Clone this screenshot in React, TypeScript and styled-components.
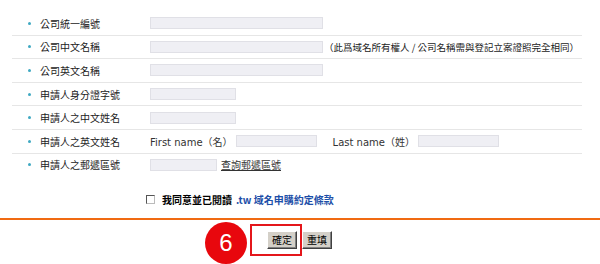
import React from "react";
import styled, { createGlobalStyle } from "styled-components";

const Global = createGlobalStyle`
  html, body { margin: 0; padding: 0; background: #fff; }
  body { width: 600px; height: 264px; overflow: hidden; font-family: "DejaVu Sans", "Noto Sans CJK TC", sans-serif; }
`;

const Page = styled.div`
  width: 600px;
  padding-top: 12px;
`;

const Form = styled.div`
  margin-left: 12px;
  width: 570px;
  display: flex;
  flex-direction: column;
`;

const Row = styled.div<{ $last?: boolean }>`
  display: flex;
  align-items: center;
  height: 22.6px;
  padding-left: 16px;
  border-bottom: ${(p) => (p.$last ? "none" : "1px solid #e6e6e6")};
`;

const Bullet = styled.span`
  width: 3px;
  height: 3px;
  border-radius: 50%;
  background: #3fa9c2;
  margin-right: 9px;
  flex: none;
`;

const Label = styled.span`
  width: 110px;
  flex: none;
  font-family: "Noto Sans CJK TC", sans-serif;
  font-size: 10px;
  color: #222;
`;

const Field = styled.div`
  display: flex;
  align-items: center;
`;

const Input = styled.div<{ $w: number }>`
  width: ${(p) => p.$w}px;
  height: 12px;
  background: #efeff4;
  border: 1px solid #e0e0e6;
  box-sizing: border-box;
  flex: none;
`;

const Note = styled.span`
  margin-left: 1px;
  font-family: "Noto Sans CJK TC", sans-serif;
  font-size: 9.5px;
  color: #222;
  white-space: nowrap;
`;

const Inline = styled.span<{ $ml?: number }>`
  margin-left: ${(p) => p.$ml ?? 0}px;
  margin-right: 3px;
  font-family: "DejaVu Sans", "Noto Sans CJK TC", sans-serif;
  font-size: 10px;
  color: #333;
  white-space: nowrap;
`;

const Link = styled.a`
  margin-left: 4px;
  font-family: "Noto Sans CJK TC", sans-serif;
  font-size: 10px;
  color: #333;
  text-decoration: underline;
`;

const AgreeRow = styled.div`
  margin-top: 11px;
  height: 24px;
  display: flex;
  align-items: center;
  padding-left: 146px;
`;

const Check = styled.span`
  width: 9px;
  height: 9px;
  box-sizing: border-box;
  border: 1px solid #555;
  border-right-color: #bbb;
  border-bottom-color: #bbb;
  background: #fff;
  margin-right: 7px;
  flex: none;
`;

const AgreeText = styled.span`
  font-family: "Noto Sans CJK TC", sans-serif;
  font-weight: 700;
  font-size: 10px;
  color: #000;
  white-space: nowrap;
`;

const AgreeLink = styled.span`
  margin-left: 4px;
  font-family: "Noto Sans CJK TC", sans-serif;
  font-weight: 700;
  font-size: 10px;
  color: #1d4fa8;
  white-space: nowrap;
`;

const Divider = styled.div`
  margin-top: 7px;
  height: 2px;
  background: #f06a12;
`;

const ButtonRow = styled.div`
  position: relative;
  padding-top: 11px;
  padding-left: 267px;
  display: flex;
  gap: 5px;
`;

const Button = styled.button`
  width: 30px;
  height: 18px;
  padding: 0;
  background: #d4d0c8;
  border: 1px solid;
  border-color: #fff #404040 #404040 #fff;
  box-shadow: inset -1px -1px 0 #808080;
  font-family: "Noto Sans CJK TC", sans-serif;
  font-size: 10px;
  color: #000;
  line-height: 16px;
`;

const Highlight = styled.div`
  position: absolute;
  left: 250px;
  top: 4px;
  width: 52px;
  height: 32px;
  box-sizing: border-box;
  border: 2px solid #e4161b;
`;

const Step = styled.div`
  position: absolute;
  left: 205px;
  top: 2px;
  width: 42px;
  height: 42px;
  border-radius: 50%;
  background: #e8070d;
  color: #fff;
  display: flex;
  align-items: center;
  justify-content: center;
  font-family: "Liberation Sans", Arial, sans-serif;
  font-size: 24px;
`;

const rows: { label: string; content: React.ReactNode }[] = [
  { label: "公司統一編號", content: <Input $w={173} /> },
  {
    label: "公司中文名稱",
    content: (
      <>
        <Input $w={173} />
        <Note>（此爲域名所有權人 / 公司名稱需與登記立案證照完全相同）</Note>
      </>
    ),
  },
  { label: "公司英文名稱", content: <Input $w={173} /> },
  { label: "申請人身分證字號", content: <Input $w={86} /> },
  { label: "申請人之中文姓名", content: <Input $w={86} /> },
  {
    label: "申請人之英文姓名",
    content: (
      <>
        <Inline>First name（名）</Inline>
        <Input $w={81} />
        <Inline $ml={16}>Last name（姓）</Inline>
        <Input $w={81} />
      </>
    ),
  },
  {
    label: "申請人之郵遞區號",
    content: (
      <>
        <Input $w={67} />
        <Link href="#">查詢郵遞區號</Link>
      </>
    ),
  },
];

export default function App() {
  return (
    <Page>
      <Global />
      <Form>
        {rows.map((r, i) => (
          <Row key={r.label} $last={i === rows.length - 1}>
            <Bullet />
            <Label>{r.label}</Label>
            <Field>{r.content}</Field>
          </Row>
        ))}
      </Form>
      <AgreeRow>
        <Check />
        <AgreeText>我同意並已閱讀</AgreeText>
        <AgreeLink>.tw 域名申購約定條款</AgreeLink>
      </AgreeRow>
      <Divider />
      <ButtonRow>
        <Step>6</Step>
        <Highlight />
        <Button>確定</Button>
        <Button>重填</Button>
      </ButtonRow>
    </Page>
  );
}
